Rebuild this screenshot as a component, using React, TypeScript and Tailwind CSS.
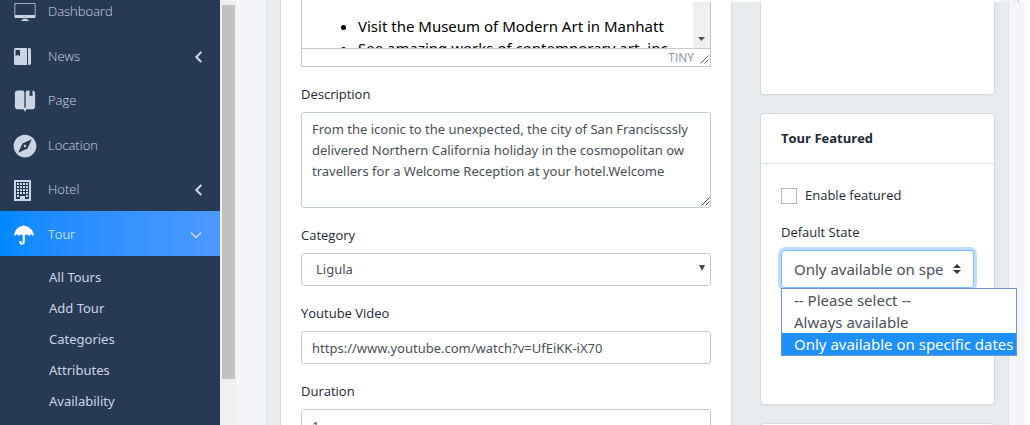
import type { ComponentType, ReactNode } from 'react';
import { IoIosDesktop, IoIosBookmarks, IoMdCompass, IoMdUmbrella } from 'react-icons/io';

type IconProps = { className?: string };

function BookIcon({ className }: IconProps) {
  return (
    <svg viewBox="0 0 17 17" className={className} fill="currentColor" aria-hidden="true">
      <path fillRule="evenodd" d="M1.5 0H13V17H1.5Q0 17 0 15.5V1.5Q0 0 1.5 0ZM1.5 2V8.5L3.75 6.8 6 8.5V2Z" />
      <path d="M14 0h1.2Q17 0 17 1.8V15.2Q17 17 15.2 17H14Z" />
    </svg>
  );
}

function BuildingIcon({ className }: IconProps) {
  const rows = [3, 6, 9, 12, 15];
  const cols = [3, 6, 9, 12];
  return (
    <svg viewBox="0 0 17 21" className={className} aria-hidden="true">
      <path fill="currentColor" fillRule="evenodd" d="M0 0H17V21H0Z M2 2V19H6V16H11V19H15V2Z" />
      {rows.map((y) =>
        cols.map((x) =>
          y === 15 && (x === 6 || x === 9) ? null : (
            <rect key={`${x}-${y}`} x={x} y={y} width="2" height="2" fill="currentColor" />
          ),
        ),
      )}
    </svg>
  );
}

function Chevron({ open }: { open?: boolean }) {
  return open ? (
    <svg viewBox="0 0 12 12" className="size-3 text-[#cbd6e4]" fill="none" stroke="currentColor" strokeWidth="1.6" aria-hidden="true">
      <path d="M1 3.5 6 8.5 11 3.5" />
    </svg>
  ) : (
    <svg viewBox="0 0 12 12" className="size-3" fill="none" stroke="currentColor" strokeWidth="2" aria-hidden="true">
      <path d="M11.3 1 6.3 6 11.3 11" />
    </svg>
  );
}

type NavEntry = {
  label: string;
  icon: ComponentType<IconProps>;
  children?: boolean;
  active?: boolean;
  iconClass?: string;
};

const nav: NavEntry[] = [
  { label: 'Dashboard', icon: IoIosDesktop, iconClass: 'size-6 -ml-px' },
  { label: 'News', icon: BookIcon, iconClass: 'size-[17px]', children: true },
  { label: 'Page', icon: IoIosBookmarks, iconClass: 'size-6 -ml-px' },
  { label: 'Location', icon: IoMdCompass, iconClass: 'size-[26px] -ml-[2px]' },
  { label: 'Hotel', icon: BuildingIcon, iconClass: 'h-[21px] w-[17px]', children: true },
  { label: 'Tour', icon: IoMdUmbrella, iconClass: 'size-6 -ml-[2px]', children: true, active: true },
];

const subNav = ['All Tours', 'Add Tour', 'Categories', 'Attributes', 'Availability'];

function Sidebar() {
  return (
    <nav className="-mt-[11px] w-[220px] shrink-0 bg-[#273a54] text-[#cbd6e4]">
      <ul>
        {nav.map(({ label, icon: Icon, iconClass, children, active }, i) => (
          <li key={label}>
            <a
              href="#"
              className={`flex items-center pt-[2px] pr-[18px] pl-[14px] text-[13px] font-light ${i % 2 ? 'h-[45px]' : 'h-[44px]'} ${
                active ? 'bg-linear-to-r from-[#0088ff] to-[#4a99ff] text-white' : ''
              }`}
            >
              <span className="flex w-[34px] shrink-0 items-center">
                <Icon className={iconClass} />
              </span>
              <span className="flex-1">{label}</span>
              {children && <Chevron open={active} />}
            </a>
          </li>
        ))}
      </ul>
      <ul className="pt-[6px] font-['Noto_Sans',sans-serif] text-[13px]">
        {subNav.map((label) => (
          <li key={label}>
            <a href="#" className="flex h-[31px] items-center pl-[49px]">
              {label}
            </a>
          </li>
        ))}
      </ul>
    </nav>
  );
}

function Grip({ className }: IconProps) {
  return (
    <svg viewBox="0 0 9 9" className={className} fill="none" stroke="currentColor" aria-hidden="true">
      <path d="M0.5 8.5 8.5 0.5M4.5 8.5 8.5 4.5" />
    </svg>
  );
}

const control =
  "w-full rounded-[3px] border border-[#c3cbd8] bg-white font-['Noto_Sans',sans-serif] text-[13px] text-[#495057] outline-none";
const labelText = 'text-[13px] leading-[23px]';

function Field({ label, id, children }: { label: string; id: string; children: ReactNode }) {
  return (
    <div className="mb-4">
      <label htmlFor={id} className={`mb-[6px] block ${labelText}`}>
        {label}
      </label>
      {children}
    </div>
  );
}

function Editor() {
  return (
    <div className="mb-4 border border-t-0 border-[#c8c8c8]">
      <div className="flex h-12 overflow-hidden">
        <ul className="min-w-0 flex-1 list-disc overflow-hidden pt-[15px] pl-14 font-['Noto_Sans',sans-serif] text-[15px] leading-[22px] whitespace-nowrap text-black">
          <li>Visit the Museum of Modern Art in Manhatt</li>
          <li>See amazing works of contemporary art, inc</li>
        </ul>
        <div className="flex w-[17px] items-end justify-center bg-[#f0f0f0] pb-[7px]">
          <svg viewBox="0 0 7 4" className="h-1 w-[7px]" aria-hidden="true">
            <path d="M0 0h7L3.5 4z" fill="#505050" />
          </svg>
        </div>
      </div>
      <div className="flex h-[18px] items-center justify-end gap-[6px] border-t border-[#c8c8c8] pr-px text-xs text-[#8a93a3]">
        <span>TINY</span>
        <Grip className="mt-1 size-[9px] text-[#5c6370]" />
      </div>
    </div>
  );
}

function MainCard() {
  return (
    <section className="min-w-0 flex-1 border-x border-[#d5dadf] bg-white px-5">
      <Editor />
      <Field label="Description" id="description">
        <div className="relative">
          <textarea
            id="description"
            className={`${control} block h-24 resize-none overflow-hidden px-[10px] py-[6px] leading-[21px] whitespace-pre`}
            defaultValue={
              'From the iconic to the unexpected, the city of San Franciscssly\ndelivered Northern California holiday in the cosmopolitan ow\ntravellers for a Welcome Reception at your hotel.Welcome'
            }
          />
          <Grip className="absolute right-px bottom-[2px] size-[9px] text-[#444]" />
        </div>
      </Field>
      <Field label="Category" id="category">
        <div className="relative">
          <select id="category" className={`${control} block h-[33px] appearance-none px-[14px]`}>
            <option>Ligula</option>
          </select>
          <svg viewBox="0 0 6 6" className="pointer-events-none absolute top-3 right-[6px] size-[6px]" aria-hidden="true">
            <path d="M0 0h6L3 6z" fill="#444b54" />
          </svg>
        </div>
      </Field>
      <Field label="Youtube Video" id="video">
        <input id="video" className={`${control} block h-[33px] px-[10px]`} defaultValue="https://www.youtube.com/watch?v=UfEiKK-iX70" />
      </Field>
      <Field label="Duration" id="duration">
        <input id="duration" className={`${control} block h-[33px] px-[10px]`} defaultValue="1" />
      </Field>
    </section>
  );
}

const states = ['-- Please select --', 'Always available', 'Only available on specific dates'];

function StateSelect() {
  return (
    <div className="relative">
      <select
        id="state"
        defaultValue={states[2]}
        className="block h-[38px] w-full appearance-none overflow-hidden rounded border border-[#80bdff] bg-white pr-[30px] pl-3 font-['Noto_Sans',sans-serif] text-[15px] text-[#495057] ring-3 ring-[#bfdeff] outline-none"
      >
        {states.map((s) => (
          <option key={s}>{s}</option>
        ))}
      </select>
      <svg viewBox="0 0 8 10" className="pointer-events-none absolute top-[14px] right-[13px] h-[10px] w-2" aria-hidden="true">
        <path d="M0 4 4 0 8 4zM0 6h8L4 10z" fill="#343a40" />
      </svg>
      <ul
        role="listbox"
        aria-label="Default State"
        className="absolute top-full left-0 w-[236px] border border-[#6e95cf] bg-white font-['Noto_Sans',sans-serif] text-[15px] leading-[22px] whitespace-nowrap text-[#495057]"
      >
        {states.map((s, i) => (
          <li key={s} role="option" aria-selected={i === 2} className={`pl-3 ${i === 2 ? 'bg-[#1e90ff] text-white' : ''}`}>
            {s}
          </li>
        ))}
      </ul>
    </div>
  );
}

const card = 'border border-[#d5dadf] bg-white shadow-xs';

function SideColumn() {
  return (
    <aside className="w-[235px] shrink-0">
      <section className={`${card} mb-[18px] h-[95px] rounded-b-[4px] border-t-0`} />
      <section className={`${card} relative mb-[18px] h-[292px] rounded-[4px]`}>
        <h2 className="border-b border-[#dfe3e6] px-5 py-[14px] text-[13px] leading-[21px] font-bold">Tour Featured</h2>
        <div className="px-5 pt-5">
          <label className={`mb-[14px] flex items-center gap-2 ${labelText}`}>
            <input type="checkbox" className="size-4 appearance-none border border-[#b3b8be] bg-white" />
            Enable featured
          </label>
          <label htmlFor="state" className={`mb-[6px] block ${labelText}`}>
            Default State
          </label>
          <StateSelect />
        </div>
      </section>
      <section className={`${card} h-24 rounded-[4px]`} />
    </aside>
  );
}

export default function App() {
  return (
    <div className="relative flex h-screen overflow-hidden bg-white pr-[5px] font-['Open_Sans',sans-serif] text-[#212934]">
      <Sidebar />
      <div className="w-[17px] shrink-0 bg-[#f0f0f0] px-[2px] pt-[5px]">
        <div className="h-[374px] bg-[#c1c1c1]" />
      </div>
      <main className="min-w-0 flex-1 bg-[#f4f5f8] pr-4 pl-[29px]">
        <div className="flex min-h-full gap-7 border-x border-[#dfe2e6] bg-[#e8ebee] px-[13px]">
          <MainCard />
          <SideColumn />
        </div>
      </main>
      <div className="absolute top-0 right-0 flex h-[2px] w-1/2 justify-end bg-white pr-[11px]">
        <div className="w-[18px] border-r border-[#c8c8c8] bg-[#f0f0f0]" />
      </div>
    </div>
  );
}
